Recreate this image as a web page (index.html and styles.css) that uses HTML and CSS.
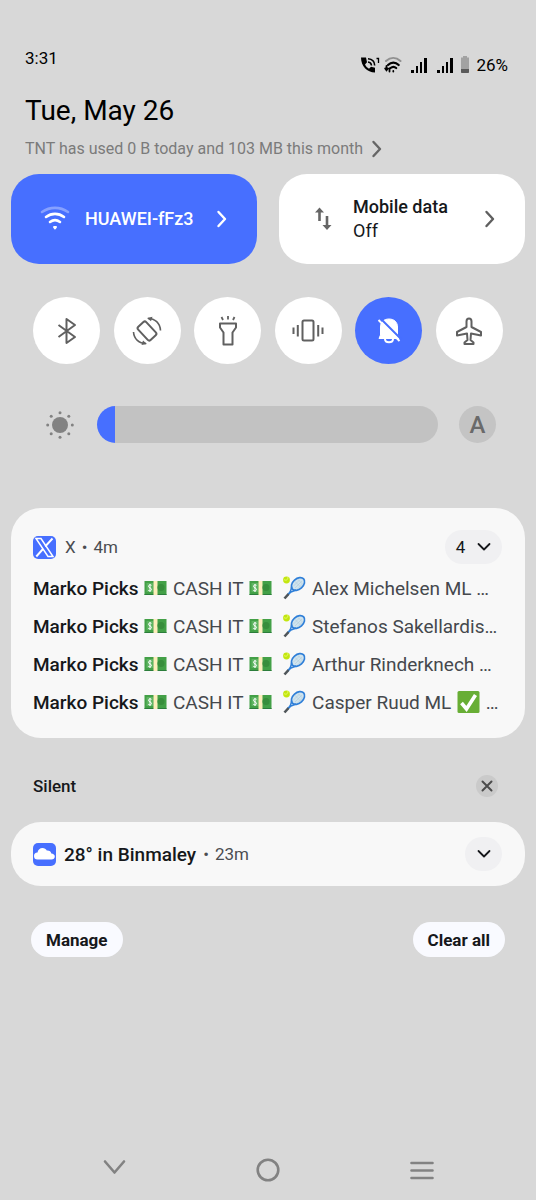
FILE: index.html
```html
<!DOCTYPE html>
<html lang="en">
<head>
<meta charset="utf-8">
<meta name="viewport" content="width=device-width, initial-scale=1">
<title>Notification shade</title>
<link rel="stylesheet" href="styles.css">
</head>
<body>
<svg class="defs" aria-hidden="true">
  <symbol id="cash" viewBox="0 0 24 16">
    <rect x="1" y="1" width="22" height="14" fill="#43a047"/>
    <path d="M1 14h22v1H1z" fill="#2b7d3b"/>
    <path d="M3 3h7v9H3z" fill="#5fb562"/>
    <rect x="10" y="1" width="4" height="14" fill="#fdeebb"/>
    <circle cx="17.500" cy="7.500" r="3.500" fill="#388e3c"/>
    <path d="M8 5.300C6.500 4.500 5 5 5 6.400c0 1.700 3 1.300 3 3 0 1.500-1.800 1.700-3.200 1M6.500 4v8" fill="none" stroke="#fff" stroke-width="1"/>
  </symbol>
  <symbol id="racket" viewBox="0 0 24 24">
    <ellipse cx="15.500" cy="8" rx="7.600" ry="5.200" transform="rotate(-42 15.500 8)" fill="#cfe3ee" stroke="#2f7fd8" stroke-width="1.700"/>
    <path d="M11 10l6-6M12.500 12l7-7M15 13l5-5M12 5l6 6M15 3l5 5" stroke="#aac6d6" stroke-width=".5"/>
    <path d="M9.500 10.500L7.500 16.500 13.500 14" fill="none" stroke="#2f7fd8" stroke-width="1.500"/>
    <path d="M8 16l-3 3" stroke="#2f7fd8" stroke-width="2"/>
    <path d="M6 18l-4 4.500" stroke="#4f5559" stroke-width="2.600"/>
    <circle cx="4" cy="4" r="3.400" fill="#c3e60f"/>
    <path d="M1.500 3.500c2 1.500 4 .5 4-2.500" fill="none" stroke="#eaff80" stroke-width=".8"/>
  </symbol>
  <symbol id="check" viewBox="0 0 24 24">
    <rect x="1" y="1" width="22" height="22" rx="1.500" fill="#68ae35"/>
    <path d="M5 13l5 6L19 5" fill="none" stroke="#fff" stroke-width="3.600"/>
  </symbol>
  <symbol id="bars" viewBox="0 0 18 18">
    <path d="M1 14h3v3H1zM6 10h2v7H6zM10 6h2v11h-2zM14 2h3v15h-3z"/>
  </symbol>
  <symbol id="right" viewBox="0 0 12 20">
    <path d="M2.500 3L9 10l-6.500 7" fill="none" stroke="currentColor" stroke-width="2.400" stroke-linecap="round" stroke-linejoin="round"/>
  </symbol>
  <symbol id="down" viewBox="0 0 14 10">
    <path d="M1.500 2L7 7.500 12.500 2" fill="none" stroke="currentColor" stroke-width="1.800" stroke-linecap="round" stroke-linejoin="round"/>
  </symbol>
</svg>

<header class="status">
  <time class="clock">3:31</time>
  <div class="status-icons">
    <svg width="22" height="18" viewBox="0 0 22 18" role="img" aria-label="Wi-Fi calling">
      <path d="M1 1.500C1 10 7 16.500 15 16.500v-4.700l-4-1-2 2C7 11.500 6 10.500 5 8.500l2-2.200-1-4.800z"/>
      <path d="M8 6c2 .2 3.300 1.500 3.500 3.500M8 2.800c4 .3 6.600 2.900 6.700 6.700" fill="none" stroke="#000" stroke-width="1.600"/>
      <path d="M16.500 2.500h2V7" fill="none" stroke="#000" stroke-width="1.300"/>
    </svg>
    <svg class="i-wifi" width="18" height="18" viewBox="0 0 18 18" role="img" aria-label="Wi-Fi" fill="none" stroke-linecap="round">
      <path d="M2 5c4.500-4 10-4 14.500 0" stroke="#919191" stroke-width="2"/>
      <path d="M4 9c3.200-3.300 7.500-3.300 10.700 0M6.500 12c1.800-1.500 4-1.500 5.700 0" stroke="#000" stroke-width="2.200"/>
      <path d="M9.300 15v.5M2.500 10v4M1.200 12.500l1.300 1.800 1.300-1.800M5.500 15.500v-3" stroke="#000" stroke-width="1.800"/>
    </svg>
    <svg class="i-bars" width="18" height="18" role="img" aria-label="SIM 1 signal"><use href="#bars"/></svg>
    <svg class="i-bars" width="18" height="18" role="img" aria-label="SIM 2 signal"><use href="#bars"/></svg>
    <svg width="10" height="18" viewBox="0 0 10 18" role="img" aria-label="Battery">
      <path d="M3 0h4v1.500h2V16a1 1 0 0 1-1 1H2a1 1 0 0 1-1-1V1.500h2z" fill="#a2a2a2"/>
      <path d="M1 13h8v3a1 1 0 0 1-1 1H2a1 1 0 0 1-1-1z" fill="#5a5a5a"/>
    </svg>
    <span class="battery">26%</span>
  </div>
</header>

<main class="shade">
  <h1 class="date">Tue, May 26</h1>
  <a class="usage" href="#usage">
    <span>TNT has used 0 B today and 103 MB this month</span>
    <svg width="12" height="20" aria-hidden="true"><use href="#right"/></svg>
  </a>

  <section class="tiles" aria-label="Connections">
    <button class="tile tile-on" type="button">
      <svg width="30" height="26" viewBox="0 0 30 26" aria-hidden="true" fill="none" stroke="#fff" stroke-width="2.600" stroke-linecap="round">
        <path d="M2 6c8-5.500 18-5.500 26 0" opacity=".35"/>
        <path d="M6 11c5.500-4.200 12.500-4.200 18 0M10 16c3-2.200 7-2.200 10 0"/>
        <path d="M14 21h2l-1 1.500z" stroke-width="2" stroke-linejoin="round"/>
      </svg>
      <span class="tile-text"><strong>HUAWEI-fFz3</strong></span>
      <svg width="12" height="20" aria-hidden="true"><use href="#right"/></svg>
    </button>
    <button class="tile" type="button">
      <svg width="30" height="26" viewBox="0 0 30 26" aria-hidden="true" fill="none" stroke="#666" stroke-width="2.600">
        <path d="M11.500 15V4M19 10v11"/>
        <path d="M7 6.500L11.500 1.500 16 6.500zM14.500 19l4.500 5 4.500-5z" fill="#666" stroke="none"/>
      </svg>
      <span class="tile-text"><strong>Mobile data</strong><span>Off</span></span>
      <svg width="12" height="20" aria-hidden="true"><use href="#right"/></svg>
    </button>
  </section>

  <section class="toggles" aria-label="Quick settings">
    <button class="toggle" type="button" aria-label="Bluetooth">
      <svg viewBox="0 0 32 32"><path d="M7.500 10l16.500 12-8.500 6V4l8.500 6L7.500 22"/></svg>
    </button>
    <button class="toggle" type="button" aria-label="Auto-rotate">
      <svg viewBox="0 0 32 32"><rect x="10.500" y="7" width="11" height="18" rx="2" transform="rotate(-43 16 16)"/><path d="M17 3.500c7 0 12 4.500 12.500 12M15 28.500C8 28.500 3 24 2.500 17" stroke-width="1.600"/><path d="M16 3l5.500-1.200-1.500 4.500zM16 29l-5.500 1 1.500-4.500z" fill="#606060" stroke="none"/></svg>
    </button>
    <button class="toggle" type="button" aria-label="Flashlight">
      <svg viewBox="0 0 32 32"><path d="M8 8.500h16v4l-3.500 5v12H11.500v-12l-3.500-5z"/><path d="M16 1v3.500M9.500 2l1.500 3M22.500 2L21 5" stroke-width="1.800"/></svg>
    </button>
    <button class="toggle" type="button" aria-label="Vibrate">
      <svg viewBox="0 0 32 32"><rect x="10.500" y="5.500" width="11" height="20" rx="1.500"/><path d="M5.800 10v11.500M1.500 12.500V19M26.200 10v11.500M30.500 12.500V19"/></svg>
    </button>
    <button class="toggle toggle-on" type="button" aria-label="Do not disturb" aria-pressed="true">
      <svg viewBox="0 0 32 32"><path d="M6 23.500h20v-1.500l-1.500-2v-8c0-5-3.500-8-8.500-8s-8.500 3-8.500 8v8z" fill="#fff" stroke="#fff" stroke-width="1"/><path d="M12 24c0 4.300 8 4.300 8 0" stroke="#fff"/><path d="M7.500 3.500l21 21" stroke="#476fff" stroke-width="2"/><path d="M5.500 5l21 21" stroke="#fff" stroke-width="2"/></svg>
    </button>
    <button class="toggle" type="button" aria-label="Airplane mode">
      <svg viewBox="0 0 32 32"><path d="M16 3.500c-1.600 0-2.500 1.300-2.500 3V12L4 17v3.500l10-2 .5 6.500-3 2.500V29h9v-1.500l-3-2.500.5-6.500 10 2V17L18.500 12V6.500c0-1.700-.9-3-2.500-3z"/></svg>
    </button>
  </section>

  <section class="brightness">
    <svg width="30" height="30" viewBox="0 0 30 30" aria-hidden="true" fill="#828282">
      <circle cx="15" cy="15" r="8"/>
      <circle cx="15" cy="2.700" r="1.500"/><circle cx="15" cy="27.300" r="1.500"/><circle cx="2.700" cy="15" r="1.500"/><circle cx="27.300" cy="15" r="1.500"/>
      <circle cx="6.200" cy="6.200" r="1.500"/><circle cx="23.800" cy="6.200" r="1.500"/><circle cx="6.200" cy="23.800" r="1.500"/><circle cx="23.800" cy="23.800" r="1.500"/>
    </svg>
    <input class="slider" type="range" min="0" max="100" value="5" aria-label="Brightness">
    <button class="auto" type="button" aria-label="Automatic brightness">A</button>
  </section>

  <article class="card group">
    <header class="card-head">
      <svg width="23" height="23" viewBox="0 0 23 23" aria-hidden="true">
        <rect width="23" height="23" rx="5" fill="#476fff"/>
        <path d="M3 2.500h5L20 20.500h-5z" fill="none" stroke="#fff" stroke-width="1.500"/>
        <path d="M19.500 2.500l-7.300 8M10 13l-6.700 7.500" fill="none" stroke="#fff" stroke-width="1.900"/>
      </svg>
      <span class="meta"><span>X</span><span>•</span><span>4m</span></span>
      <button class="expand count" type="button" aria-label="Expand 4 notifications">4 <svg width="14" height="10" aria-hidden="true"><use href="#down"/></svg></button>
    </header>
    <ul class="messages">
      <li><b>Marko Picks</b> <svg class="cash" role="img" aria-label="cash"><use href="#cash"/></svg> CASH IT <svg class="cash" role="img" aria-label="cash"><use href="#cash"/></svg>&nbsp; <svg class="emoji" role="img" aria-label="tennis"><use href="#racket"/></svg> Alex Michelsen ML …</li>
      <li><b>Marko Picks</b> <svg class="cash" role="img" aria-label="cash"><use href="#cash"/></svg> CASH IT <svg class="cash" role="img" aria-label="cash"><use href="#cash"/></svg>&nbsp; <svg class="emoji" role="img" aria-label="tennis"><use href="#racket"/></svg> Stefanos Sakellardis…</li>
      <li><b>Marko Picks</b> <svg class="cash" role="img" aria-label="cash"><use href="#cash"/></svg> CASH IT <svg class="cash" role="img" aria-label="cash"><use href="#cash"/></svg>&nbsp; <svg class="emoji" role="img" aria-label="tennis"><use href="#racket"/></svg> Arthur Rinderknech …</li>
      <li><b>Marko Picks</b> <svg class="cash" role="img" aria-label="cash"><use href="#cash"/></svg> CASH IT <svg class="cash" role="img" aria-label="cash"><use href="#cash"/></svg>&nbsp; <svg class="emoji" role="img" aria-label="tennis"><use href="#racket"/></svg> Casper Ruud ML <svg class="emoji" role="img" aria-label="check mark"><use href="#check"/></svg> …</li>
    </ul>
  </article>

  <div class="silent">
    <h2>Silent</h2>
    <button class="close" type="button" aria-label="Clear silent notifications">
      <svg width="12" height="12" viewBox="0 0 12 12"><path d="M1.500 1.500l9 9M10.500 1.500l-9 9" stroke="#4c4c4c" stroke-width="2" stroke-linecap="round"/></svg>
    </button>
  </div>

  <article class="card weather">
    <svg width="23" height="23" viewBox="0 0 23 23" aria-hidden="true">
      <rect width="23" height="23" rx="5" fill="#476fff"/>
      <path d="M4.500 16.500a3.500 3.500 0 0 1 0-7C5 6.500 7 5 9.500 5c2 0 3.500 1 4.300 2.600 2.400-.3 4.200 1 4.500 3 2 .1 3.500 1.400 3.500 3 0 1.800-1.400 2.900-3.300 2.900z" fill="#fff"/>
    </svg>
    <h3>28° in Binmaley</h3>
    <span class="meta"><span>•</span><span>23m</span></span>
    <button class="expand" type="button" aria-label="Expand weather"><svg width="14" height="10" aria-hidden="true"><use href="#down"/></svg></button>
  </article>

  <div class="actions">
    <button type="button">Manage</button>
    <button type="button">Clear all</button>
  </div>
</main>

<nav class="nav" aria-label="System navigation">
  <button type="button" aria-label="Back"><svg width="28" height="28" viewBox="0 0 28 28"><path d="M5 5.500l9.500 11L24 5.500"/></svg></button>
  <button type="button" aria-label="Home"><svg width="28" height="28" viewBox="0 0 28 28"><circle cx="14" cy="14" r="10.300"/></svg></button>
  <button type="button" aria-label="Recent apps"><svg width="28" height="28" viewBox="0 0 28 28"><path d="M3.500 7h21M3.500 14.500h21M3.500 22h21"/></svg></button>
</nav>
</body>
</html>
```
FILE: styles.css
```css
* { box-sizing: border-box; }

body {
  margin: 0;
  min-height: 100vh;
  display: flex;
  flex-direction: column;
  background: #d8d8d8;
  color: #16181b;
  font-family: Roboto, "Liberation Sans", sans-serif;
  font-size: 17px;
}

button {
  border: 0;
  padding: 0;
  background: none;
  color: inherit;
  font: inherit;
  cursor: pointer;
}

h1, h2, h3, ul { margin: 0; padding: 0; font-weight: 400; }
svg { flex: none; }
.defs { position: absolute; width: 0; height: 0; }

.status {
  display: flex;
  justify-content: space-between;
  padding: 48px 28px 0 25px;
  color: #000;
}
.clock { line-height: 20px; }
.status-icons { display: flex; align-items: center; padding-top: 7px; line-height: 20px; }
.i-wifi { margin: 0 8px 0 2px; }
.i-bars { margin-right: 8px; }
.i-bars + .i-bars { margin-right: 6px; }
.battery { margin-left: 6px; }

.shade { flex: 1; padding: 0 11px; }
.date { padding: 0 14px; margin-top: 18px; font-size: 28px; line-height: 36px; color: #000; }
.usage {
  display: flex;
  align-items: center;
  gap: 8px;
  padding: 0 14px;
  margin-top: 10px;
  font-size: 16px;
  line-height: 20px;
  color: #7b7b7b;
  text-decoration: none;
}
.usage svg { color: #666; }

.tiles { display: grid; grid-template-columns: 1fr 1fr; gap: 22px; margin-top: 15px; }
.tile {
  display: flex;
  align-items: center;
  height: 90px;
  padding: 0 29px;
  border-radius: 28px;
  background: #fff;
  text-align: left;
  font-size: 18px;
  line-height: 24px;
}
.tile > svg:last-child { color: #5f5f5f; }
.tile strong { font-weight: 500; }
.tile-text { flex: 1; display: flex; flex-direction: column; margin-left: 15px; }
.tile-on { background: #476fff; color: #fff; }
.tile-on > svg:last-child { color: #fff; }

.toggles { display: flex; justify-content: space-between; padding: 0 22px; margin-top: 33px; }
.toggle {
  display: grid;
  place-items: center;
  width: 67px;
  height: 67px;
  border-radius: 50%;
  background: #fff;
}
.toggle svg { width: 32px; height: 32px; fill: none; stroke: #606060; stroke-width: 2; stroke-linejoin: round; }
.toggle-on { background: #476fff; }

.brightness { display: flex; align-items: center; padding: 0 29px 0 34px; margin-top: 42px; }
.slider {
  appearance: none;
  flex: 1;
  min-width: 0;
  height: 37px;
  margin: 0 21px 0 22px;
  border-radius: 19px;
  background: linear-gradient(to right, #476fff 18px, #c2c2c2 18px);
}
.slider::-webkit-slider-thumb { appearance: none; width: 18px; height: 37px; background: transparent; }
.auto {
  width: 37px;
  height: 37px;
  border-radius: 50%;
  background: #c4c4c4;
  color: #6a6a6a;
  font-size: 24px;
  font-weight: 500;
}

.card { background: #f8f8f8; border-radius: 30px; padding: 0 23px 0 22px; }
.group { margin-top: 65px; padding-top: 22px; padding-bottom: 16px; }
.card-head { display: flex; align-items: center; }
.meta { display: flex; gap: 6px; margin-left: 9px; color: #4b4d51; }
.expand {
  display: flex;
  align-items: center;
  justify-content: center;
  width: 37px;
  height: 34px;
  margin-left: auto;
  border-radius: 17px;
  background: #f0f0f2;
}
.count { width: 57px; gap: 12px; }
.messages { margin-top: 6px; list-style: none; }
.messages li { font-size: 19px; line-height: 38px; white-space: nowrap; color: #45484d; }
.messages b { font-weight: 500; color: #16181b; }
.cash { width: 25px; height: 16px; vertical-align: -1px; }
.emoji { width: 25px; height: 24px; vertical-align: -5px; }

.silent { display: flex; align-items: center; justify-content: space-between; padding: 0 27px 0 22px; margin-top: 36px; height: 24px; }
.silent h2 { font-size: 17px; font-weight: 500; }
.close { display: grid; place-items: center; width: 22px; height: 22px; border-radius: 50%; background: #cacaca; }

.weather { display: flex; align-items: center; height: 64px; margin-top: 24px; }
.weather h3 { margin-left: 8px; font-size: 19px; font-weight: 500; }
.weather .meta { margin-left: 7px; }

.actions { display: flex; justify-content: space-between; padding: 0 20px; margin-top: 36px; }
.actions button { height: 35px; padding: 0 15px; border-radius: 18px; background: #f9faff; font-weight: 700; }

.nav { display: flex; justify-content: space-between; padding: 0 100px 16px; }
.nav button { height: 28px; }
.nav svg { display: block; fill: none; stroke: #828282; stroke-width: 2.6px; stroke-linecap: round; stroke-linejoin: round; }
```
